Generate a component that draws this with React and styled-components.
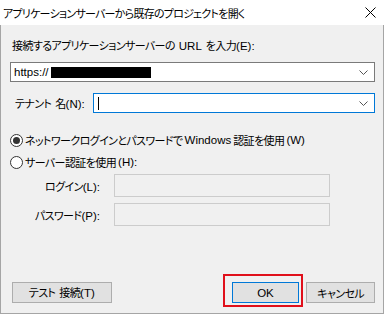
import styled, { createGlobalStyle } from 'styled-components'

const GlobalStyle = createGlobalStyle`
  html, body {
    margin: 0;
    padding: 0;
    background: #ffffff;
  }
  body {
    font-family: "Noto Sans CJK JP", "Liberation Sans", sans-serif;
    font-size: 11px;
    letter-spacing: -0.6px;
    word-spacing: 2px;
    color: #000;
    font-feature-settings: "palt";
  }
`

const Dialog = styled.div`
  width: 384px;
  height: 314px;
  box-sizing: border-box;
  border: 1px solid #a5a5a5;
  border-top: none;
  display: flex;
  flex-direction: column;
  background: #f0f0f0;
`

const TitleBar = styled.div`
  height: 25px;
  background: #fff;
  display: flex;
  align-items: center;
  justify-content: space-between;
  padding-left: 3px;
  padding-right: 8px;
  margin: 0 -1px;
  line-height: 16px;
  letter-spacing: -0.75px;
`

const CloseIcon = styled.svg`
  width: 11px;
  height: 11px;
`

const Body = styled.div`
  flex: 1;
  display: flex;
  flex-direction: column;
  padding: 12px 8px 10px 9px;
`

const Label = styled.div`
  line-height: 16px;
  padding-left: 2px;
  white-space: nowrap;
`

const Combo = styled.div`
  height: 20px;
  box-sizing: border-box;
  border: 1px solid ${p => (p.$focus ? '#0078d7' : '#7a7a7a')};
  background: #fff;
  display: flex;
  align-items: center;
  padding: 0 6px 0 3px;
  flex: 1;
`

const ComboText = styled.div`
  flex: 1;
  display: flex;
  align-items: center;
  font-family: "Liberation Sans", sans-serif;
  font-size: 11.5px;
  letter-spacing: 0;
`

const Redacted = styled.span`
  display: inline-block;
  width: 100px;
  height: 11px;
  background: #000;
  margin-left: 2px;
`

const Caret = styled.span`
  display: inline-block;
  width: 1px;
  height: 13px;
  background: #000;
  margin-left: 1px;
`

const Chevron = styled.svg`
  width: 9px;
  height: 5px;
`

const Row = styled.div`
  display: flex;
  align-items: center;
  margin-top: ${p => p.$top || 0}px;
`

const TenantLabel = styled.div`
  width: 83px;
  padding-left: 5px;
  box-sizing: border-box;
  white-space: nowrap;
`

const RadioRow = styled.label`
  display: flex;
  align-items: center;
  gap: 2px;
  height: 18px;
  margin-top: ${p => p.$top || 0}px;
  white-space: nowrap;
`

const RadioCircle = styled.span`
  width: 13px;
  height: 13px;
  box-sizing: border-box;
  border-radius: 50%;
  border: 1px solid #333;
  background: #fff;
  display: flex;
  align-items: center;
  justify-content: center;

  &::after {
    content: '';
    width: 7px;
    height: 7px;
    border-radius: 50%;
    background: ${p => (p.$checked ? '#333' : 'transparent')};
  }
`

const FieldLabel = styled.div`
  width: 104px;
  text-align: right;
  padding-right: 14px;
  box-sizing: border-box;
  white-space: nowrap;
`

const DisabledInput = styled.div`
  width: 216px;
  height: 23px;
  box-sizing: border-box;
  border: 1px solid #cccccc;
  background: #f0f0f0;
`

const ButtonRow = styled.div`
  margin-top: auto;
  display: flex;
  align-items: center;
  padding-left: 2px;
`

const Button = styled.button`
  height: 21px;
  width: ${p => p.$w}px;
  box-sizing: border-box;
  border: 1px solid ${p => (p.$default ? '#0078d7' : '#adadad')};
  background: #e1e1e1;
  font-family: "Noto Sans CJK JP", "Liberation Sans", sans-serif;
  font-feature-settings: "palt";
  font-size: 11px;
  letter-spacing: -0.6px;
  word-spacing: 2px;
  line-height: 16px;
  color: #000;
  padding: 0;
  margin-left: ${p => p.$ml || 0}px;
  position: relative;
`

const Highlight = styled.span`
  position: absolute;
  left: -10px;
  top: -9px;
  right: -5px;
  bottom: -5px;
  border: 2px solid #e0101b;
  pointer-events: none;
`

const Mnemonic = styled.span`
  font-family: "Liberation Sans", sans-serif;
  font-size: 11.5px;
  letter-spacing: 0;
`

function ChevronDown() {
  return (
    <Chevron viewBox="0 0 9 5">
      <polyline points="0.5,0.5 4.5,4.5 8.5,0.5" fill="none" stroke="#555" strokeWidth="1" />
    </Chevron>
  )
}

export default function App() {
  return (
    <>
      <GlobalStyle />
      <Dialog>
        <TitleBar>
          <span>アプリケーションサーバーから既存のプロジェクトを開く</span>
          <CloseIcon viewBox="0 0 11 11">
            <path d="M0.5 0.5 L10.5 10.5 M10.5 0.5 L0.5 10.5" stroke="#000" strokeWidth="1" />
          </CloseIcon>
        </TitleBar>
        <Body>
          <Label>
            接続するアプリケーションサーバーの <Mnemonic>URL</Mnemonic> を入力<Mnemonic>(E):</Mnemonic>
          </Label>
          <Row $top={8}>
            <Combo>
              <ComboText>
                https://<Redacted />
              </ComboText>
              <ChevronDown />
            </Combo>
          </Row>
          <Row $top={11}>
            <TenantLabel>
              テナント 名<Mnemonic>(N):</Mnemonic>
            </TenantLabel>
            <Combo $focus>
              <ComboText>
                <Caret />
              </ComboText>
              <ChevronDown />
            </Combo>
          </Row>
          <RadioRow $top={18}>
            <RadioCircle $checked />
            ネットワークログインとパスワードで <Mnemonic>Windows</Mnemonic> 認証を使用<Mnemonic>(W)</Mnemonic>
          </RadioRow>
          <RadioRow $top={4}>
            <RadioCircle />
            サーバー認証を使用<Mnemonic>(H):</Mnemonic>
          </RadioRow>
          <Row $top={3}>
            <FieldLabel>
              ログイン<Mnemonic>(L):</Mnemonic>
            </FieldLabel>
            <DisabledInput />
          </Row>
          <Row $top={6}>
            <FieldLabel>
              パスワード<Mnemonic>(P):</Mnemonic>
            </FieldLabel>
            <DisabledInput />
          </Row>
          <ButtonRow>
            <Button $w={100}>
              テスト 接続<Mnemonic>(T)</Mnemonic>
            </Button>
            <Button $w={68} $ml={120} $default>
              <Mnemonic>OK</Mnemonic>
              <Highlight />
            </Button>
            <Button $w={69} $ml={7}>
              キャンセル
            </Button>
          </ButtonRow>
        </Body>
      </Dialog>
    </>
  )
}
